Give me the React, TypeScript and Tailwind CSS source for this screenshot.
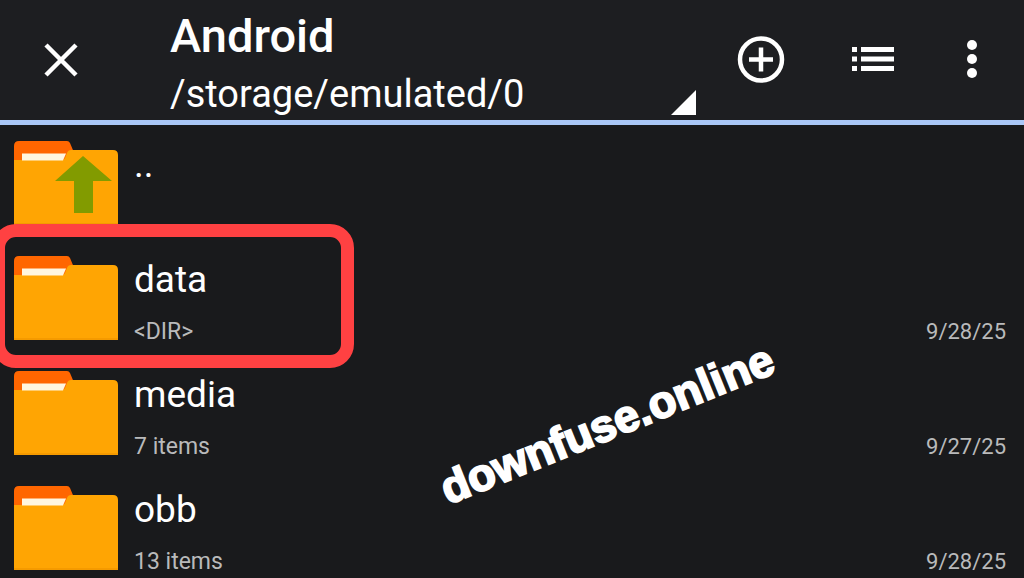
import React from 'react';

interface Entry {
  name: string;
  info?: string;
  date?: string;
  up?: boolean;
  highlighted?: boolean;
}

const entries: Entry[] = [
  { name: '..', up: true },
  { name: 'data', info: '<DIR>', date: '9/28/25', highlighted: true },
  { name: 'media', info: '7 items', date: '9/27/25' },
  { name: 'obb', info: '13 items', date: '9/28/25' },
];

const FolderIcon: React.FC<{ up?: boolean }> = ({ up }) => (
  <svg className="shrink-0" width="104" height="84" viewBox="0 0 104 84" aria-hidden="true">
    <path d="M0 30V5Q0 0 5 0H53Q55 0 56 2L61 14V30Z" fill="#ff6600" />
    <path d="M0 19H48Q50 19 51 17L53 12Q54 9 57 9H99Q104 9 104 14V84H0Z" fill="#ffa503" />
    <path d="M8 12.5H52L49 19.5H8Z" fill="#fff6e0" />
    <path d="M0 82H104V84H0Z" fill="#f59a00" />
    {up && <path d="M69 15L98 40H79V72H60V40H41Z" fill="#829b00" />}
  </svg>
);

const Header: React.FC = () => {
  return (
    <header className="flex min-h-[125px] items-stretch border-b-[5px] border-[#aac7f7] bg-[#1d1e21] pr-[9px]">
      <button type="button" aria-label="Close" className="flex w-[122px] shrink-0 items-center justify-center">
        <svg width="34" height="34" viewBox="0 0 34 34" stroke="currentColor" strokeWidth="4.5">
          <path d="M2 2L32 32M32 2L2 32" />
        </svg>
      </button>

      {/* Location drop-down */}
      <button type="button" className="mr-[9px] ml-12 flex min-w-0 flex-1 items-end justify-between pt-2 pb-1 text-left">
        <span className="flex flex-col gap-2">
          <span className="text-[47px] leading-[56px] font-medium">Android</span>
          <span className="text-[38px] leading-[44px] whitespace-nowrap">/storage/emulated/0</span>
        </span>
        <svg className="shrink-0" width="25" height="26" viewBox="0 0 25 26" fill="currentColor" aria-hidden="true">
          <path d="M25 0V25H0Z" />
        </svg>
      </button>

      <button type="button" aria-label="Add" className="flex w-28 shrink-0 items-center justify-center">
        <svg width="48" height="48" viewBox="0 0 48 48" fill="none" stroke="currentColor" strokeWidth="4.5">
          <circle cx="24" cy="23.5" r="21" />
          <path d="M24 11.5V35.5M12 23.5H36" />
        </svg>
      </button>
      <button type="button" aria-label="List view" className="flex w-28 shrink-0 items-center justify-center">
        <svg width="42" height="26" viewBox="0 0 42 26" fill="currentColor">
          <path d="M0 0H5V5H0ZM9 0H42V5H9ZM0 9.5H5V14.5H0ZM9 9.5H42V14.5H9ZM0 19H5V24H0ZM9 19H42V24H9Z" />
        </svg>
      </button>
      <button type="button" aria-label="More options" className="flex w-[86px] shrink-0 items-center justify-center">
        <svg width="10" height="40" viewBox="0 0 10 40" fill="currentColor">
          <circle cx="5" cy="5" r="5" />
          <circle cx="5" cy="19" r="5" />
          <circle cx="5" cy="33" r="5" />
        </svg>
      </button>
    </header>
  );
};

const Row: React.FC<{ entry: Entry }> = ({ entry }) => {
  return (
    <li className="relative flex min-h-[90px] items-start pr-[18px] pl-[14px]">
      <FolderIcon up={entry.up} />
      <div className="ml-4 flex flex-1 flex-col gap-[14px]">
        <span className="text-[37px] leading-[48px]">{entry.name}</span>
        {entry.info && (
          <div className="flex items-baseline justify-between leading-[28px] text-[#b9babb]">
            <span className="text-[23px]">{entry.info}</span>
            <span className="text-[22px]">{entry.date}</span>
          </div>
        )}
      </div>
      {entry.highlighted && (
        <div className="pointer-events-none absolute -top-8 -left-2 h-36 w-[362px] rounded-3xl border-[13px] border-[#ff4142]" />
      )}
    </li>
  );
};

const App: React.FC = () => {
  return (
    <div className="relative min-h-screen overflow-hidden bg-[#191a1c] font-['Roboto',sans-serif] text-white">
      <Header />
      <main>
        <ul className="flex flex-col gap-[25px] pt-4">
          {entries.map((entry) => (
            <Row key={entry.name} entry={entry} />
          ))}
        </ul>
      </main>

      {/* Watermark */}
      <div className="pointer-events-none absolute top-[424px] left-[607px] -translate-x-1/2 -translate-y-1/2 -rotate-22 font-['Liberation_Sans',sans-serif] text-[45px] leading-none font-bold whitespace-nowrap [-webkit-text-stroke:2px_white]">
        downfuse.online
      </div>
    </div>
  );
};

export default App;
